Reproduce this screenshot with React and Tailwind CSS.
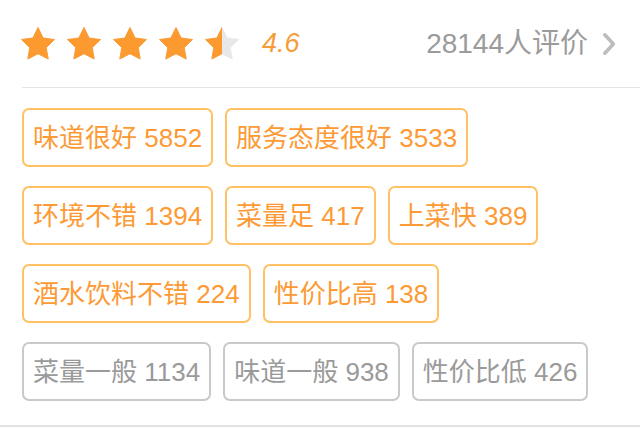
import React from 'react';

const STAR = 'M12 1.6l3.2 6.6 7.2 1-5.2 5.1 1.25 7.2L12 18.1l-6.45 3.4L6.8 14.3 1.6 9.2l7.2-1z';

// Star with optional fill fraction
const Star = ({ fill = 1, id }) => (
    <svg width="38" height="38" viewBox="0 0 24 24">
        <defs>
            <clipPath id={id}>
                <rect x="0" y="0" width={24 * fill} height="24" />
            </clipPath>
        </defs>
        <path d={STAR} fill="#e8e8e8" stroke="#e8e8e8" strokeWidth="0.6" strokeLinejoin="round" />
        <path d={STAR} fill="#fd9a2f" stroke="#fd9a2f" strokeWidth="0.6" strokeLinejoin="round" clipPath={`url(#${id})`} />
    </svg>
);

const Tag = ({ label, count, good }) => (
    <div
        className={`h-[59px] flex items-center px-[9px] rounded-[7px] border-2 text-[26px] leading-none whitespace-nowrap ${
            good ? 'border-[#ffc163] text-[#fd9a35]' : 'border-[#c9c9c9] text-[#9a9a9a]'
        }`}
    >
        {label} {count}
    </div>
);

const tags = [
    [['味道很好', 5852, true], ['服务态度很好', 3533, true]],
    [['环境不错', 1394, true], ['菜量足', 417, true], ['上菜快', 389, true]],
    [['酒水饮料不错', 224, true], ['性价比高', 138, true]],
    [['菜量一般', 1134, false], ['味道一般', 938, false], ['性价比低', 426, false]],
];

export default function App() {
    return (
        <div
            className="w-[640px] h-[428px] bg-white overflow-hidden"
            style={{ fontFamily: '"Liberation Sans", "Noto Sans CJK SC", sans-serif' }}
        >
            <div className="border-b-2 border-[#e2e2e2]">
                {/* header */}
                <div className="ml-[22px] h-[88px] flex items-center border-b border-[#e6e6e6]">
                    <div className="flex items-center gap-[8px] -ml-[3px]">
                        <Star id="s1" />
                        <Star id="s2" />
                        <Star id="s3" />
                        <Star id="s4" />
                        <Star id="s5" fill={0.5} />
                    </div>
                    <span className="ml-[21px] text-[27px] italic text-[#f69d3a]">4.6</span>
                    <div className="ml-auto mr-[24px] flex items-center text-[28px] text-[#9b9b9b]">
                        <span>28144人评价</span>
                        <svg className="ml-[14px]" width="14" height="24" viewBox="0 0 14 24">
                            <path d="M2.8 2.8l8.6 9.2-8.6 9.2" fill="none" stroke="#bdbdbd" strokeWidth="3.6" strokeLinecap="round" strokeLinejoin="round" />
                        </svg>
                    </div>
                </div>
                {/* tags */}
                <div className="pl-[22px] pt-[20px] pb-[24px] flex flex-col gap-[19px]">
                    {tags.map((row, i) => (
                        <div key={i} className="flex gap-[12px]">
                            {row.map(([label, count, good]) => (
                                <Tag key={label} label={label} count={count} good={good} />
                            ))}
                        </div>
                    ))}
                </div>
            </div>
        </div>
    );
}
